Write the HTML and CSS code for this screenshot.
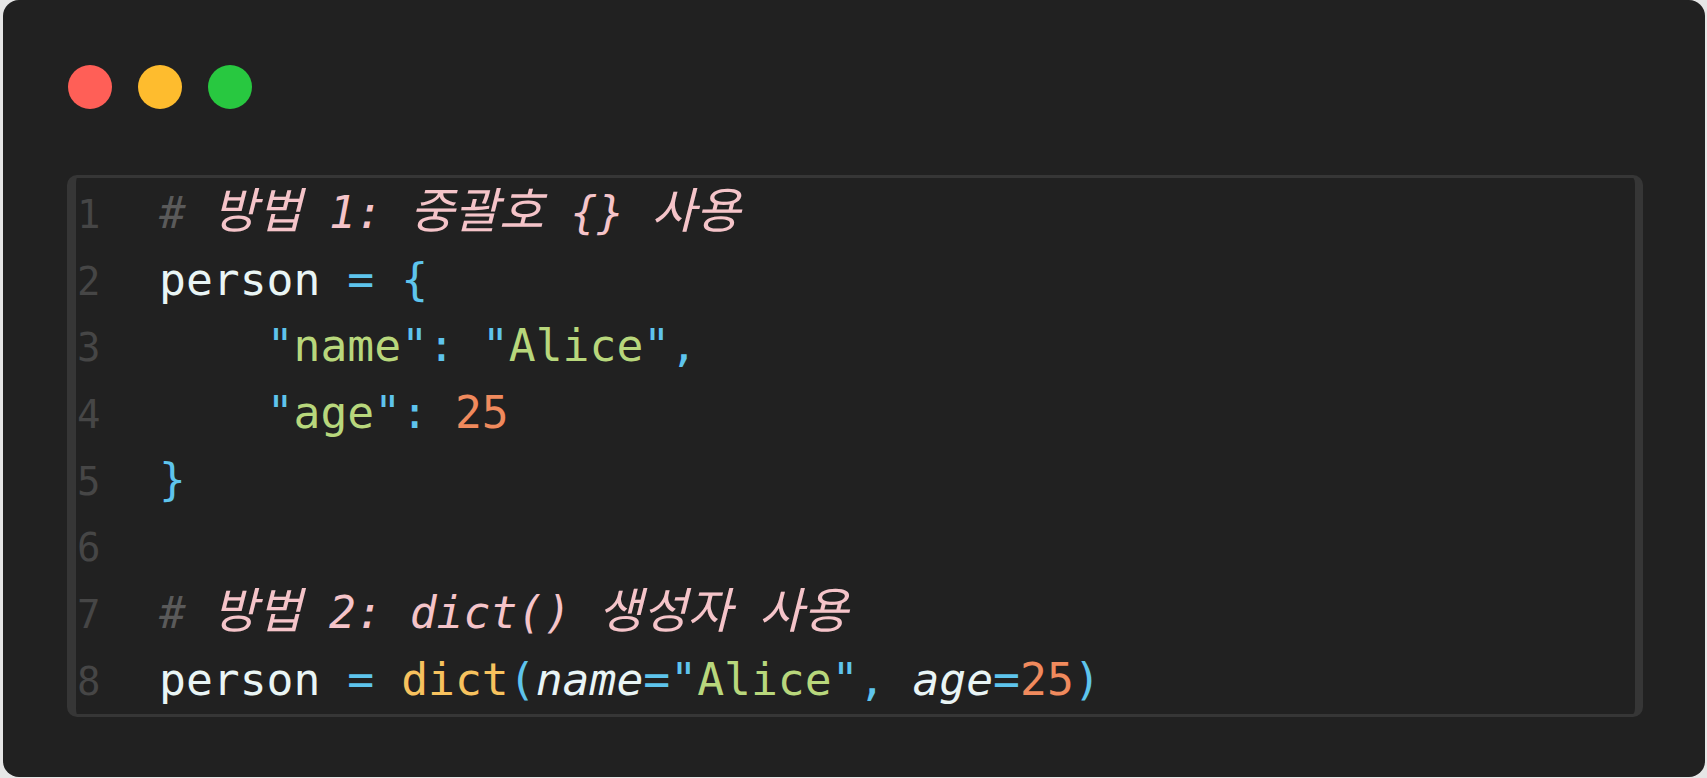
FILE: index.html
```html
<!DOCTYPE html>
<html lang="ko">
<head>
<meta charset="utf-8">
<title>Python dict</title>
<link rel="stylesheet" href="styles.css">
</head>
<body>
<div class="card">
  <div class="dots">
    <span class="dot red"></span>
    <span class="dot yellow"></span>
    <span class="dot green"></span>
  </div>
  <div class="code">
    <div class="line"><span class="ln">1</span><span class="src"><span class="hash">#</span> <span class="cm"><span class="ko">방법</span> 1: <span class="ko">중괄호</span> {} <span class="ko">사용</span></span></span></div>
    <div class="line"><span class="ln">2</span><span class="src"><span class="id">person</span> <span class="op">=</span> <span class="op">{</span></span></div>
    <div class="line"><span class="ln">3</span><span class="src">    <span class="op">"</span><span class="str">name</span><span class="op">":</span> <span class="op">"</span><span class="str">Alice</span><span class="op">",</span></span></div>
    <div class="line"><span class="ln">4</span><span class="src">    <span class="op">"</span><span class="str">age</span><span class="op">":</span> <span class="num">25</span></span></div>
    <div class="line"><span class="ln">5</span><span class="src"><span class="op">}</span></span></div>
    <div class="line"><span class="ln">6</span><span class="src"> </span></div>
    <div class="line"><span class="ln">7</span><span class="src"><span class="hash">#</span> <span class="cm"><span class="ko">방법</span> 2: dict() <span class="ko">생성자</span> <span class="ko">사용</span></span></span></div>
    <div class="line"><span class="ln">8</span><span class="src"><span class="id">person</span> <span class="op">=</span> <span class="fn">dict</span><span class="op">(</span><span class="param">name</span><span class="op">="</span><span class="str">Alice</span><span class="op">",</span> <span class="param">age</span><span class="op">=</span><span class="num">25</span><span class="op">)</span></span></div>
  </div>
</div>
</body>
</html>
```

FILE: styles.css
```css
html, body {
  margin: 0;
  padding: 0;
  background: #e6e6e6;
}

body {
  width: 1707px;
  height: 778px;
  overflow: hidden;
}

.card {
  margin-left: 3px;
  width: 1702px;
  height: 777px;
  box-sizing: border-box;
  background: #212121;
  border-radius: 16px;
  padding: 65px 62px 0 64px;
  display: flex;
  flex-direction: column;
}

.dots {
  display: flex;
  gap: 26px;
  padding-left: 1px;
  height: 44px;
  margin-bottom: 66px;
}

.dot {
  width: 44px;
  height: 44px;
  border-radius: 50%;
  display: block;
}

.red { background: #ff5f57; }
.yellow { background: #febc2e; }
.green { background: #28c840; }

.code {
  border-style: solid;
  border-color: #363636;
  border-width: 3px 8px 3px 9px;
  border-radius: 10px;
  background: #212121;
  padding-top: 2px;
  display: flex;
  flex-direction: column;
}

.line {
  display: flex;
  align-items: baseline;
  height: 66.7px;
  line-height: 66.7px;
  font-family: "DejaVu Sans Mono", "Noto Sans CJK KR", monospace;
  font-size: 44.7px;
  white-space: pre;
}

.ln {
  width: 83px;
  flex: none;
  box-sizing: border-box;
  padding-left: 1px;
  color: #464646;
  font-size: 39px;
}

.src {
  color: #e9f5f5;
}

.hash { color: #5a5a5a; font-style: italic; }
.cm { color: #f5c4c9; font-style: italic; }
.ko {
  font-family: "Noto Sans CJK KR", sans-serif;
  font-size: 48.5px;
  line-height: 1;
}
.id { color: #e9f5f5; }
.op { color: #5ec4ec; }
.str { color: #b8d77c; }
.num { color: #f08a5d; }
.fn { color: #f7c25e; }
.param { color: #e9f5f5; font-style: italic; }
```
